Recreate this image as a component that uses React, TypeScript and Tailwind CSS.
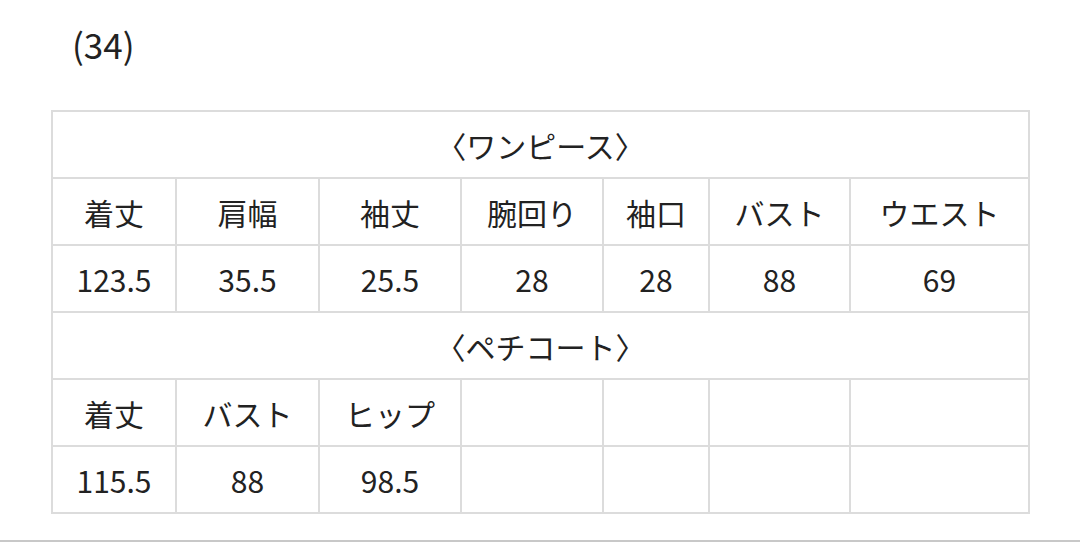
const dress = {
  heads: ["着丈", "肩幅", "袖丈", "腕回り", "袖口", "バスト", "ウエスト"],
  values: ["123.5", "35.5", "25.5", "28", "28", "88", "69"],
};

const petti = {
  heads: ["着丈", "バスト", "ヒップ", "", "", "", ""],
  values: ["115.5", "88", "98.5", "", "", "", ""],
};

const widths = ["w-[124px]", "w-[143px]", "w-[142px]", "w-[142px]", "w-[106px]", "w-[141px]", "w-[179px]"];

function Cell({ children }: { children?: string }) {
  return (
    <td className="border-2 border-[#dcdcdc] h-[67px] p-0 text-center align-middle">
      {children}
    </td>
  );
}

export default function App() {
  return (
    <div
      className="w-[1080px] h-[542px] bg-white text-[#222] border-b-2 border-[#c8c8c8] overflow-hidden"
      style={{ fontFamily: '"Noto Sans CJK JP", "Noto Sans", sans-serif' }}
    >
      <p className="pl-[72px] pt-[20px] text-[35px] leading-[48px]">(34)</p>
      <table className="mt-[42px] ml-[51px] table-fixed border-collapse text-[30px] leading-none">
        <colgroup>
          {widths.map((w, i) => (
            <col key={i} className={w} />
          ))}
        </colgroup>
        <tbody>
          <tr>
            <td colSpan={7} className="border-2 border-[#dcdcdc] h-[67px] text-center">
              〈ワンピース〉
            </td>
          </tr>
          <tr>
            {dress.heads.map((h, i) => (
              <Cell key={i}>{h}</Cell>
            ))}
          </tr>
          <tr>
            {dress.values.map((v, i) => (
              <Cell key={i}>{v}</Cell>
            ))}
          </tr>
          <tr>
            <td colSpan={7} className="border-2 border-[#dcdcdc] h-[67px] text-center">
              〈ペチコート〉
            </td>
          </tr>
          <tr>
            {petti.heads.map((h, i) => (
              <Cell key={i}>{h}</Cell>
            ))}
          </tr>
          <tr>
            {petti.values.map((v, i) => (
              <Cell key={i}>{v}</Cell>
            ))}
          </tr>
        </tbody>
      </table>
    </div>
  );
}
